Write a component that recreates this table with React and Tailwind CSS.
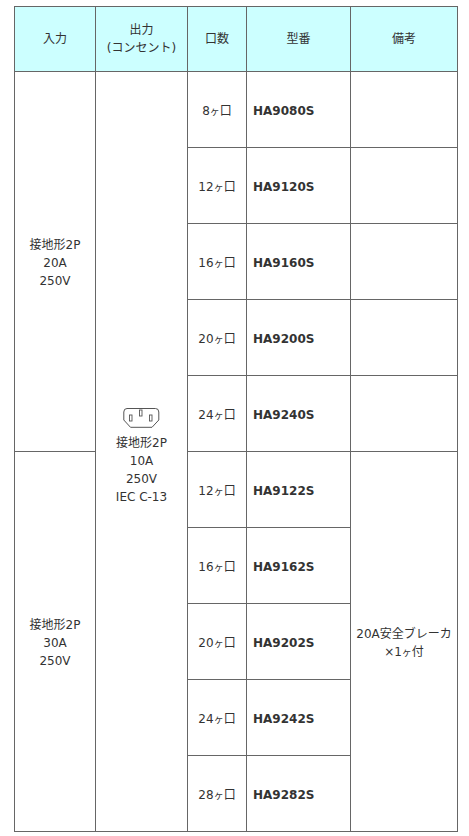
import React from "react";

const cell = "border border-[#666666] align-middle";
const dcell = "border border-[#666666] align-middle pt-[3px]";

function Outlet() {
  return (
    <svg width="37" height="20" viewBox="0 0 37 20" className="mx-auto block">
      <path d="M4 0.5 H32.5 Q35.8 0.5 35.8 4 V12 L29 19.3 H7.5 L0.8 12 V4 Q0.8 0.5 4 0.5 Z" fill="none" stroke="#555" strokeWidth="1" />
      <rect x="6.5" y="7" width="2.5" height="6" fill="none" stroke="#555" strokeWidth="0.9" />
      <rect x="16.5" y="2" width="2.5" height="6" fill="none" stroke="#555" strokeWidth="0.9" />
      <rect x="26.5" y="7" width="2.5" height="6" fill="none" stroke="#555" strokeWidth="0.9" />
    </svg>
  );
}

const group1 = [
  ["8", "HA9080S"],
  ["12", "HA9120S"],
  ["16", "HA9160S"],
  ["20", "HA9200S"],
  ["24", "HA9240S"],
];
const group2 = [
  ["12", "HA9122S"],
  ["16", "HA9162S"],
  ["20", "HA9202S"],
  ["24", "HA9242S"],
  ["28", "HA9282S"],
];

function Count({ n }) {
  return (
    <td className={`${dcell} text-center`}>
      {n}
      <span className="text-[10px]">ヶ</span>口
    </td>
  );
}

export default function App() {
  return (
    <div className="bg-white w-[469px] h-[836px] pt-[6px] pl-[14px] text-[12px] leading-[18px] text-[#333333] [font-family:'DejaVu_Sans','Noto_Sans_CJK_JP',sans-serif]">
      <table className="border-collapse w-[443px] table-fixed">
        <colgroup>
          <col className="w-[81px]" />
          <col className="w-[92px]" />
          <col className="w-[59px]" />
          <col className="w-[104px]" />
          <col className="w-[107px]" />
        </colgroup>
        <thead>
          <tr className="h-[65px] bg-[#ccffff]">
            <th className={`${cell} font-normal text-center`}>入力</th>
            <th className={`${cell} font-normal text-center`}>
              出力
              <br />
              (コンセント)
            </th>
            <th className={`${cell} font-normal text-center`}>口数</th>
            <th className={`${cell} font-normal text-center`}>型番</th>
            <th className={`${cell} font-normal text-center`}>備考</th>
          </tr>
        </thead>
        <tbody>
          {group1.map(([n, m], i) => (
            <tr key={m} className="h-[76px]">
              {i === 0 && (
                <td rowSpan={5} className={`${dcell} text-center`}>
                  接地形2P
                  <br />
                  20A
                  <br />
                  250V
                </td>
              )}
              {i === 0 && (
                <td rowSpan={10} className={`${cell} pt-[10px] text-center`}>
                  <div className="flex flex-col items-center">
                    <Outlet />
                    <div className="mt-[6px]">
                      接地形2P
                      <br />
                      10A
                      <br />
                      250V
                      <br />
                      IEC C-13
                    </div>
                  </div>
                </td>
              )}
              <Count n={n} />
              <td className={`${dcell} pl-[6px] font-bold`}>{m}</td>
              <td className={cell}></td>
            </tr>
          ))}
          {group2.map(([n, m], i) => (
            <tr key={m} className="h-[76px]">
              {i === 0 && (
                <td rowSpan={5} className={`${dcell} text-center`}>
                  接地形2P
                  <br />
                  30A
                  <br />
                  250V
                </td>
              )}
              <Count n={n} />
              <td className={`${dcell} pl-[6px] font-bold`}>{m}</td>
              {i === 0 && (
                <td rowSpan={5} className={`${dcell} text-center`}>
                  20A安全ブレーカ
                  <br />
                  ×1<span className="text-[10px]">ヶ</span>付
                </td>
              )}
            </tr>
          ))}
        </tbody>
      </table>
    </div>
  );
}
